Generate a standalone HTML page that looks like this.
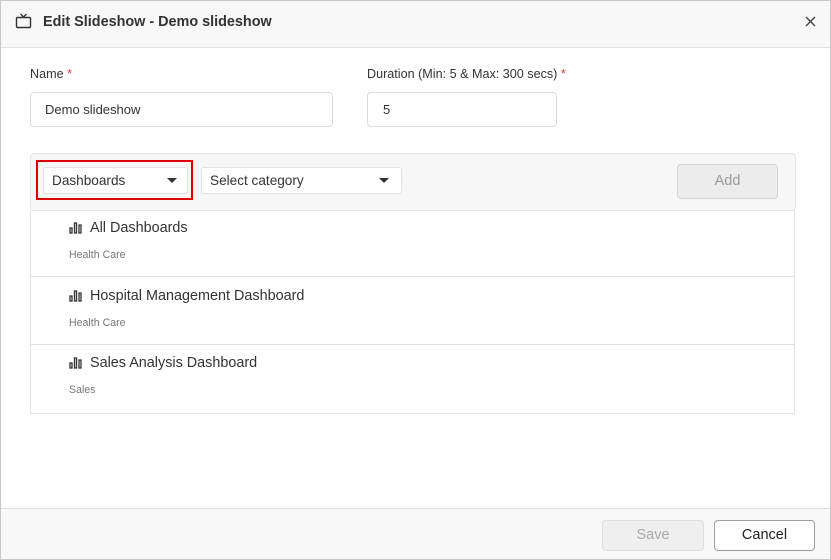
<!DOCTYPE html>
<html><head><style>
*{box-sizing:border-box;margin:0;padding:0}
body{width:831px;height:560px;font-family:"Liberation Sans",Roboto,sans-serif;background:#fff;position:relative;overflow:hidden;color:#333}
.frame{position:absolute;left:0;top:0;width:831px;height:560px;border:1px solid #c8c8c8;z-index:5;pointer-events:none}
.hdr{position:absolute;left:0;top:0;width:831px;height:48px;background:#f8f8f8;border-bottom:1px solid #e0e0e0}
.ttl{position:absolute;left:43px;top:14px;font-size:14.4px;font-weight:bold;color:#333}
.lbl{position:absolute;font-size:12.6px;color:#333}
.lbl b{color:#e53935;font-weight:normal}
.inp{position:absolute;border:1px solid #dcdcdc;border-radius:4px;font-size:13px;padding-left:14px;line-height:33px;height:35px}
.tb{position:absolute;left:30px;top:153px;width:766px;height:58px;background:#f7f7f7;border:1px solid #e6e6e6;border-radius:4px}
.dd{position:absolute;height:27px;background:#fff;border:1px solid #e2e2e2;border-radius:3px;font-size:13.6px;line-height:25px;padding-left:8px;color:#333}
.car{position:absolute;top:10px;width:0;height:0;border-left:5px solid transparent;border-right:5px solid transparent;border-top:5px solid #333}
.list{position:absolute;left:30px;top:210px;width:765px;height:204px;border:1px solid #e2e2e2;border-top:none}
.it{position:absolute;left:0;width:763px;height:67px;border-bottom:1px solid #e2e2e2}
.it .t{position:absolute;left:59px;top:10px;font-size:14.4px;color:#333}
.it .s{position:absolute;left:38px;top:39px;font-size:10.6px;color:#777}
.ic{position:absolute;left:38px;top:12px}
.ftr{position:absolute;left:0;top:508px;width:831px;height:52px;background:#f8f8f8;border-top:1px solid #e0e0e0}
.btn{position:absolute;height:31px;border-radius:4px;font-size:14.5px;text-align:center;line-height:29px}
</style></head><body>
<div class="frame"></div>
<div class="hdr">
<svg style="position:absolute;left:15px;top:12px" width="17" height="17" viewBox="0 0 17 17" fill="none" stroke="#333" stroke-width="1.4"><rect x="1.5" y="5.5" width="14" height="10" rx="1"/><path d="M5.5 2 L8.5 5 L11.5 2"/></svg>
<div class="ttl">Edit Slideshow - Demo slideshow</div>
<svg style="position:absolute;left:805px;top:16px" width="11" height="11" viewBox="0 0 11 11" stroke="#444" stroke-width="1.4"><path d="M1 1L10 10M10 1L1 10"/></svg>
</div>
<div class="lbl" style="left:30px;top:67px">Name <b>*</b></div>
<div class="inp" style="left:30px;top:92px;width:303px">Demo slideshow</div>
<div class="lbl" style="left:367px;top:67px">Duration (Min: 5 &amp; Max: 300 secs) <b>*</b></div>
<div class="inp" style="left:367px;top:92px;width:190px;padding-left:15px">5</div>
<div class="tb">
<div style="position:absolute;left:5px;top:6px;width:157px;height:40px;border:2px solid #e00000"></div>
<div class="dd" style="left:12px;top:13px;width:145px">Dashboards<span class="car" style="left:123px"></span></div>
<div class="dd" style="left:170px;top:13px;width:201px">Select category<span class="car" style="left:177px"></span></div>
<div class="btn" style="left:646px;top:10px;width:101px;height:35px;line-height:33px;background:#ececec;border:1px solid #d4d4d4;color:#999">Add</div>
</div>
<div class="list">
<div class="it" style="top:0"><svg class="ic" width="14" height="12" viewBox="0 0 14 12" fill="none" stroke="#333" stroke-width="1.3"><rect x="1" y="6" width="2" height="5"/><rect x="5.5" y="1" width="2" height="10"/><rect x="10" y="3" width="2" height="8"/></svg><div class="t">All Dashboards</div><div class="s">Health Care</div></div>
<div class="it" style="top:68px"><svg class="ic" width="14" height="12" viewBox="0 0 14 12" fill="none" stroke="#333" stroke-width="1.3"><rect x="1" y="6" width="2" height="5"/><rect x="5.5" y="1" width="2" height="10"/><rect x="10" y="3" width="2" height="8"/></svg><div class="t">Hospital Management Dashboard</div><div class="s">Health Care</div></div>
<div class="it" style="top:135px;border-bottom:none"><svg class="ic" width="14" height="12" viewBox="0 0 14 12" fill="none" stroke="#333" stroke-width="1.3"><rect x="1" y="6" width="2" height="5"/><rect x="5.5" y="1" width="2" height="10"/><rect x="10" y="3" width="2" height="8"/></svg><div class="t">Sales Analysis Dashboard</div><div class="s">Sales</div></div>
</div>
<div class="ftr">
<div class="btn" style="left:602px;top:11px;width:102px;background:#efefef;border:1px solid #dedede;color:#aaa">Save</div>
<div class="btn" style="left:714px;top:11px;width:101px;background:#fff;border:1px solid #9e9e9e;color:#222">Cancel</div>
</div>
</body></html>
